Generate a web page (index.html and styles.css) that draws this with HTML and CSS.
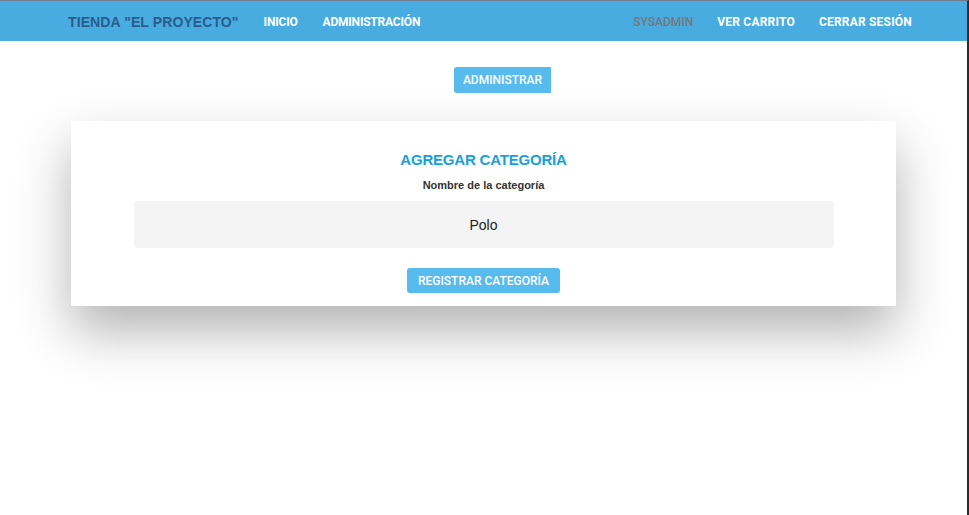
FILE: index.html
```html
<!DOCTYPE html>
<html lang="es">
<head>
<meta charset="utf-8">
<title>Tienda "El Proyecto"</title>
<link rel="stylesheet" href="styles.css">
</head>
<body>
<div class="frame">
  <nav class="navbar">
    <div class="nav-left">
      <a class="brand" href="#">TIENDA "EL PROYECTO"</a>
      <a class="nav-link" href="#">INICIO</a>
      <a class="nav-link" href="#">ADMINISTRACIÓN</a>
    </div>
    <div class="nav-right">
      <span class="nav-user">SYSADMIN</span>
      <a class="nav-link nav-link-wide" href="#">VER CARRITO</a>
      <a class="nav-link nav-link-wide" href="#">CERRAR SESIÓN</a>
    </div>
  </nav>
  <main class="content">
    <div class="toolbar">
      <button class="btn btn-admin">ADMINISTRAR</button>
    </div>
    <section class="card">
      <h2 class="card-title">AGREGAR CATEGORÍA</h2>
      <label class="field-label" for="cat">Nombre de la categoría</label>
      <input class="field-input" id="cat" type="text" value="Polo">
      <button class="btn btn-submit">REGISTRAR CATEGORÍA</button>
    </section>
  </main>
</div>
</body>
</html>
```
FILE: styles.css
```css
* { box-sizing: border-box; }
html, body { margin: 0; padding: 0; background: #fff; }
body { font-family: "Liberation Sans", Arial, sans-serif; }

.frame {
  min-height: 515px;
  border-top: 1px solid #6d7e8c;
  border-right: 2px solid #2b2b2b;
}

.navbar {
  height: 40px;
  padding: 1px 55px 0 68px;
  background: #48ace0;
  display: flex;
  align-items: center;
  justify-content: space-between;
}
.nav-left {
  display: flex;
  align-items: center;
  gap: 25px;
}
.nav-right {
  display: flex;
  align-items: center;
  gap: 24px;
}
.brand {
  font-family: "Liberation Sans", Arial, sans-serif;
  font-weight: bold;
  font-size: 14px;
  color: #2a5c8d;
  text-decoration: none;
  letter-spacing: 0.1px;
}
.nav-link {
  font-family: Roboto, "Liberation Sans", sans-serif;
  font-weight: 700;
  font-size: 12px;
  color: #fff;
  text-decoration: none;
  letter-spacing: -0.2px;
}
.nav-link-wide {
  letter-spacing: 0.2px;
}
.nav-user {
  font-family: Roboto, "Liberation Sans", sans-serif;
  font-weight: 500;
  font-size: 12px;
  color: #777;
}

.content {
  padding-top: 26px;
}
.toolbar {
  display: flex;
  justify-content: center;
  padding-left: 38px;
}
.btn {
  font-family: Roboto, "Liberation Sans", sans-serif;
  font-weight: 500;
  font-size: 12px;
  color: #fff;
  background: #58bbee;
  border: none;
  cursor: pointer;
}
.btn-admin {
  width: 97px;
  height: 26px;
  border-radius: 3px 0 0 3px;
}

.card {
  width: 825px;
  margin: 28px 0 0 71px;
  background: #fff;
  box-shadow: 0 25px 50px rgba(0, 0, 0, 0.3);
  padding: 30px 62px 13px;
  display: flex;
  flex-direction: column;
  align-items: center;
}
.card-title {
  margin: 0;
  font-size: 15px;
  line-height: 17px;
  font-weight: bold;
  color: #17a1d8;
  letter-spacing: -0.2px;
}
.field-label {
  margin-top: 11px;
  font-size: 11px;
  line-height: 13px;
  font-weight: bold;
  color: #333;
}
.field-input {
  margin-top: 9px;
  width: 700px;
  height: 47px;
  border: none;
  border-radius: 4px;
  background: #f4f4f4;
  text-align: center;
  font-family: "Liberation Sans", Arial, sans-serif;
  font-size: 14px;
  color: #222;
  outline: none;
}
.btn-submit {
  margin-top: 20px;
  width: 153px;
  height: 25px;
  border-radius: 3px;
}
```
